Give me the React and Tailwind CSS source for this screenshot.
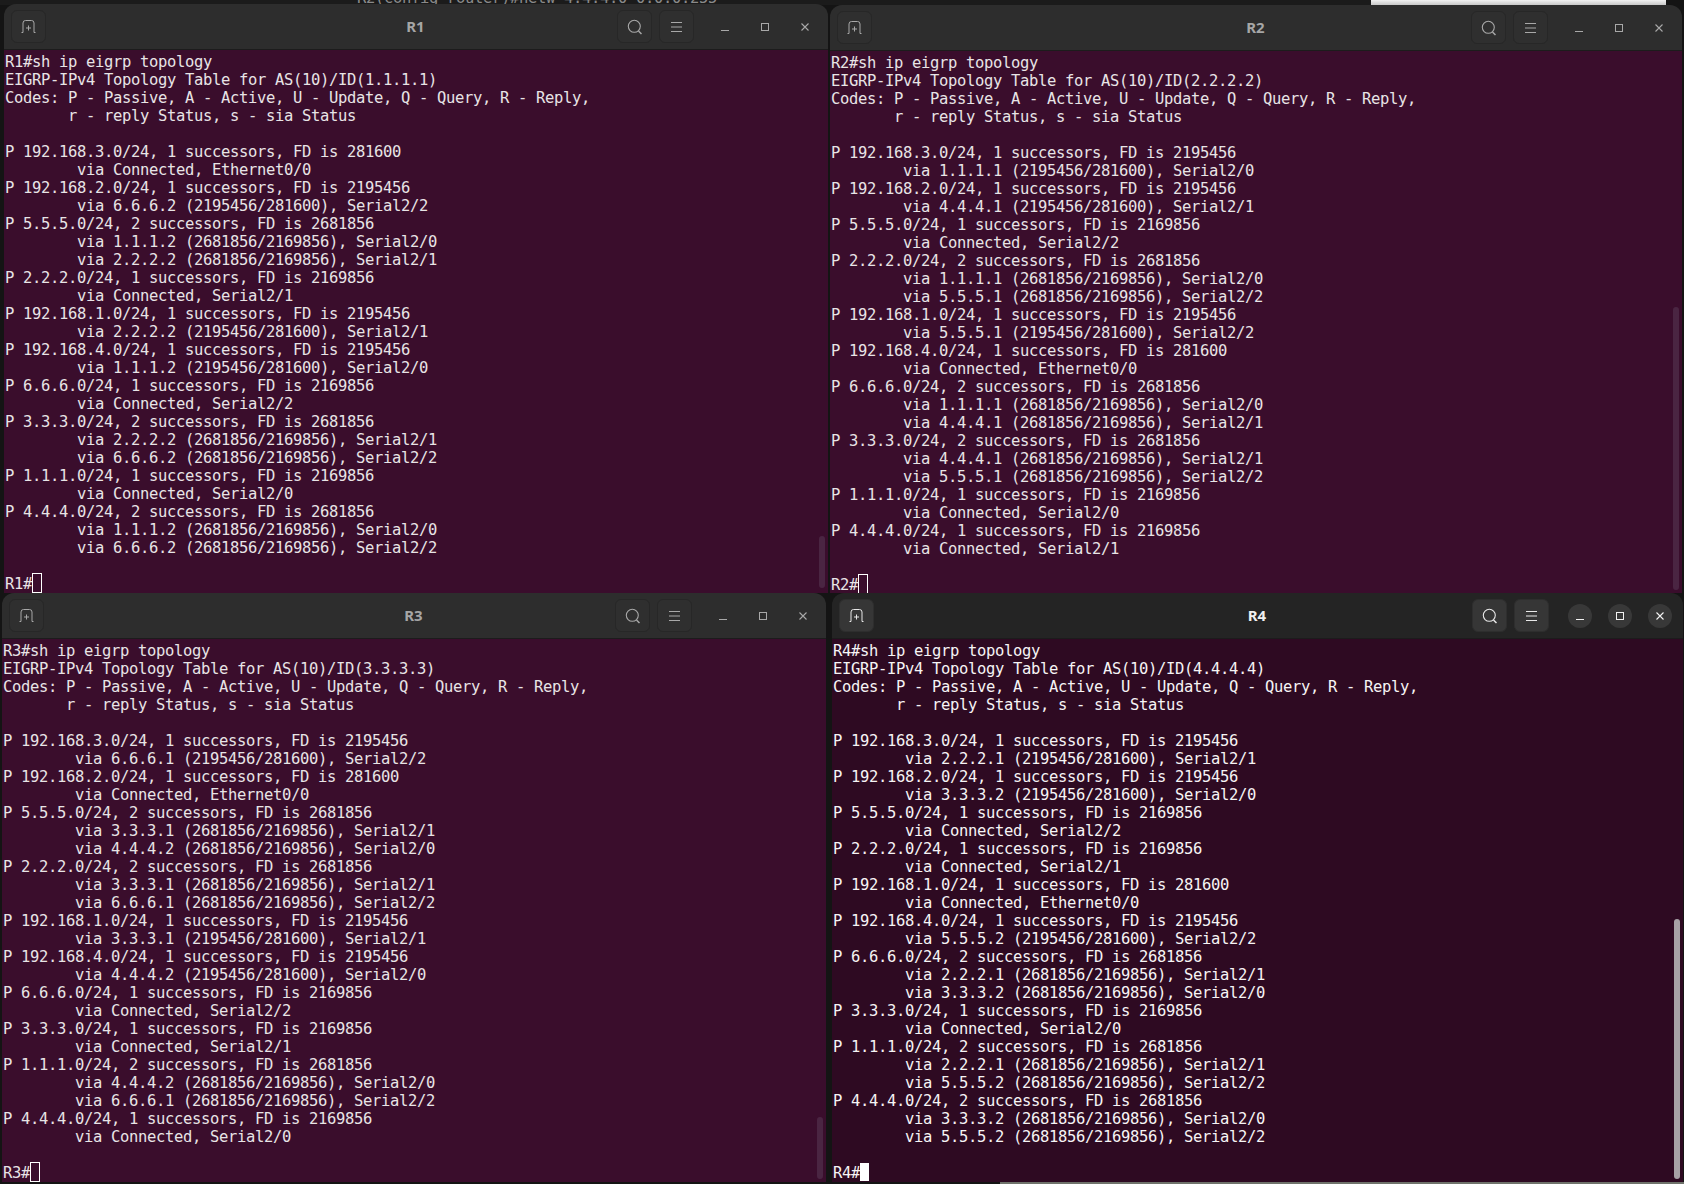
import React from 'react';

const header = (name, id) => `${name}#sh ip eigrp topology
EIGRP-IPv4 Topology Table for AS(10)/ID(${id})
Codes: P - Passive, A - Active, U - Update, Q - Query, R - Reply,
       r - reply Status, s - sia Status

`;

const r1 = header('R1', '1.1.1.1') + `P 192.168.3.0/24, 1 successors, FD is 281600
        via Connected, Ethernet0/0
P 192.168.2.0/24, 1 successors, FD is 2195456
        via 6.6.6.2 (2195456/281600), Serial2/2
P 5.5.5.0/24, 2 successors, FD is 2681856
        via 1.1.1.2 (2681856/2169856), Serial2/0
        via 2.2.2.2 (2681856/2169856), Serial2/1
P 2.2.2.0/24, 1 successors, FD is 2169856
        via Connected, Serial2/1
P 192.168.1.0/24, 1 successors, FD is 2195456
        via 2.2.2.2 (2195456/281600), Serial2/1
P 192.168.4.0/24, 1 successors, FD is 2195456
        via 1.1.1.2 (2195456/281600), Serial2/0
P 6.6.6.0/24, 1 successors, FD is 2169856
        via Connected, Serial2/2
P 3.3.3.0/24, 2 successors, FD is 2681856
        via 2.2.2.2 (2681856/2169856), Serial2/1
        via 6.6.6.2 (2681856/2169856), Serial2/2
P 1.1.1.0/24, 1 successors, FD is 2169856
        via Connected, Serial2/0
P 4.4.4.0/24, 2 successors, FD is 2681856
        via 1.1.1.2 (2681856/2169856), Serial2/0
        via 6.6.6.2 (2681856/2169856), Serial2/2

R1#`;

const r2 = header('R2', '2.2.2.2') + `P 192.168.3.0/24, 1 successors, FD is 2195456
        via 1.1.1.1 (2195456/281600), Serial2/0
P 192.168.2.0/24, 1 successors, FD is 2195456
        via 4.4.4.1 (2195456/281600), Serial2/1
P 5.5.5.0/24, 1 successors, FD is 2169856
        via Connected, Serial2/2
P 2.2.2.0/24, 2 successors, FD is 2681856
        via 1.1.1.1 (2681856/2169856), Serial2/0
        via 5.5.5.1 (2681856/2169856), Serial2/2
P 192.168.1.0/24, 1 successors, FD is 2195456
        via 5.5.5.1 (2195456/281600), Serial2/2
P 192.168.4.0/24, 1 successors, FD is 281600
        via Connected, Ethernet0/0
P 6.6.6.0/24, 2 successors, FD is 2681856
        via 1.1.1.1 (2681856/2169856), Serial2/0
        via 4.4.4.1 (2681856/2169856), Serial2/1
P 3.3.3.0/24, 2 successors, FD is 2681856
        via 4.4.4.1 (2681856/2169856), Serial2/1
        via 5.5.5.1 (2681856/2169856), Serial2/2
P 1.1.1.0/24, 1 successors, FD is 2169856
        via Connected, Serial2/0
P 4.4.4.0/24, 1 successors, FD is 2169856
        via Connected, Serial2/1

R2#`;

const r3 = header('R3', '3.3.3.3') + `P 192.168.3.0/24, 1 successors, FD is 2195456
        via 6.6.6.1 (2195456/281600), Serial2/2
P 192.168.2.0/24, 1 successors, FD is 281600
        via Connected, Ethernet0/0
P 5.5.5.0/24, 2 successors, FD is 2681856
        via 3.3.3.1 (2681856/2169856), Serial2/1
        via 4.4.4.2 (2681856/2169856), Serial2/0
P 2.2.2.0/24, 2 successors, FD is 2681856
        via 3.3.3.1 (2681856/2169856), Serial2/1
        via 6.6.6.1 (2681856/2169856), Serial2/2
P 192.168.1.0/24, 1 successors, FD is 2195456
        via 3.3.3.1 (2195456/281600), Serial2/1
P 192.168.4.0/24, 1 successors, FD is 2195456
        via 4.4.4.2 (2195456/281600), Serial2/0
P 6.6.6.0/24, 1 successors, FD is 2169856
        via Connected, Serial2/2
P 3.3.3.0/24, 1 successors, FD is 2169856
        via Connected, Serial2/1
P 1.1.1.0/24, 2 successors, FD is 2681856
        via 4.4.4.2 (2681856/2169856), Serial2/0
        via 6.6.6.1 (2681856/2169856), Serial2/2
P 4.4.4.0/24, 1 successors, FD is 2169856
        via Connected, Serial2/0

R3#`;

const r4 = header('R4', '4.4.4.4') + `P 192.168.3.0/24, 1 successors, FD is 2195456
        via 2.2.2.1 (2195456/281600), Serial2/1
P 192.168.2.0/24, 1 successors, FD is 2195456
        via 3.3.3.2 (2195456/281600), Serial2/0
P 5.5.5.0/24, 1 successors, FD is 2169856
        via Connected, Serial2/2
P 2.2.2.0/24, 1 successors, FD is 2169856
        via Connected, Serial2/1
P 192.168.1.0/24, 1 successors, FD is 281600
        via Connected, Ethernet0/0
P 192.168.4.0/24, 1 successors, FD is 2195456
        via 5.5.5.2 (2195456/281600), Serial2/2
P 6.6.6.0/24, 2 successors, FD is 2681856
        via 2.2.2.1 (2681856/2169856), Serial2/1
        via 3.3.3.2 (2681856/2169856), Serial2/0
P 3.3.3.0/24, 1 successors, FD is 2169856
        via Connected, Serial2/0
P 1.1.1.0/24, 2 successors, FD is 2681856
        via 2.2.2.1 (2681856/2169856), Serial2/1
        via 5.5.5.2 (2681856/2169856), Serial2/2
P 4.4.4.0/24, 2 successors, FD is 2681856
        via 3.3.3.2 (2681856/2169856), Serial2/0
        via 5.5.5.2 (2681856/2169856), Serial2/2

R4#`;

const NewTabIcon = () => (
  <svg width="15" height="13" viewBox="0 0 15 13" fill="none" stroke="currentColor" strokeWidth="1">
    <path d="M0.5 12.5h1.5V3a2.5 2.5 0 0 1 2.5-2.5h6A2.5 2.5 0 0 1 13 3v9.5h1.5" />
    <path d="M7.5 5.5v5M5 8h5" />
  </svg>
);

const SearchIcon = () => (
  <svg width="16" height="16" viewBox="0 0 16 16" fill="none" stroke="currentColor" strokeWidth="1.1">
    <circle cx="7.3" cy="7.3" r="6" />
    <path d="M11.5 12l3 3" strokeWidth="1.5" />
  </svg>
);

const MenuIcon = () => (
  <svg width="14" height="12" viewBox="0 0 14 12" fill="none" stroke="currentColor" strokeWidth="1">
    <path d="M1 1.5h11M1 6h11M1 10.5h11" />
  </svg>
);

const MinIcon = () => (
  <svg width="12" height="12" viewBox="0 0 12 12" fill="none" stroke="currentColor" strokeWidth="1">
    <path d="M2 9.5h8" />
  </svg>
);

const MaxIcon = () => (
  <svg width="12" height="12" viewBox="0 0 12 12" fill="none" stroke="currentColor" strokeWidth="1">
    <rect x="2.5" y="2.5" width="7" height="7" />
  </svg>
);

const CloseIcon = () => (
  <svg width="12" height="12" viewBox="0 0 12 12" fill="none" stroke="currentColor" strokeWidth="1.1">
    <path d="M2.5 2.5l7 7M9.5 2.5l-7 7" />
  </svg>
);

const ToolButton = ({ focused, children }) => (
  <div className={`flex h-[33px] w-[35px] items-center justify-center rounded-[6px] border ${focused ? 'border-[#2e2e2e] bg-[#363636] text-[#e8e8e8]' : 'border-[#272727] bg-[#2f2f2f] text-[#a8a8a8]'}`}>
    {children}
  </div>
);

const WindowButton = ({ focused, children }) => (
  <div className="flex h-[33px] w-[40px] items-center justify-center">
    <div className={`flex h-[24px] w-[24px] items-center justify-center rounded-full ${focused ? 'bg-[#383838] text-[#f2f2f2]' : 'text-[#a8a8a8]'}`}>
      {children}
    </div>
  </div>
);

const Terminal = ({ title, text, focused, className, barClass }) => (
  <div className={`absolute flex flex-col overflow-hidden rounded-t-[12px] ${className}`}>
    <div className={`grid h-[46px] shrink-0 grid-cols-[1fr_auto_1fr] items-center border-b border-[#1c1c1c] pl-[7px] pr-[3px] ${focused ? 'bg-[#242424]' : 'bg-[#2d2d2d]'}`}>
      <div className="flex">
        <ToolButton focused={focused}><NewTabIcon /></ToolButton>
      </div>
      <div className={`pr-[5px] text-[15px] font-bold ${focused ? 'text-[#f0f0f0]' : 'text-[#a6a6a6]'}`} style={{ fontFamily: '"Noto Sans", sans-serif' }}>{title}</div>
      <div className="flex items-center justify-end gap-[7px]">
        <ToolButton focused={focused}><SearchIcon /></ToolButton>
        <ToolButton focused={focused}><MenuIcon /></ToolButton>
        <div className="ml-[4px] flex">
          <WindowButton focused={focused}><MinIcon /></WindowButton>
          <WindowButton focused={focused}><MaxIcon /></WindowButton>
          <WindowButton focused={focused}><CloseIcon /></WindowButton>
        </div>
      </div>
    </div>
    <div className={`relative flex-1 overflow-hidden ${focused ? 'bg-[#2e0a22] text-[#f6f4f5]' : 'bg-[#3a0d2c] text-[#e8e4e6]'}`}>
      <pre className="pl-[1px] pt-[3px] font-['DejaVu_Sans_Mono',monospace] text-[15.5px] leading-[18px] tracking-[-0.33px]">
        {text}
        {focused
          ? <span className="-mt-[1px] inline-block h-[18px] w-[9px] bg-white align-top" />
          : <span className="-mt-[2px] inline-block h-[20px] w-[10px] border border-white align-top" />}
      </pre>
      <div className={`absolute right-[3px] w-[6px] rounded-full ${barClass}`} />
    </div>
  </div>
);

export default function App() {
  return (
    <div className="relative h-[1184px] w-[1684px] overflow-hidden bg-[#141414]">
      {/* what's left of the windows behind */}
      <div className="absolute left-0 top-0 flex h-[5px] w-[1684px]">
        <div className="relative w-[1371px] overflow-hidden bg-[#1b1b1b]">
          <div className="absolute -top-[11px] left-[357px] whitespace-pre font-['DejaVu_Sans_Mono',monospace] text-[15.5px] leading-[18px] tracking-[-0.33px] text-[#8a8a8a]">R2(config-router)#netw 4.4.4.0 0.0.0.255</div>
        </div>
        <div className="w-[295px] bg-gradient-to-b from-[#f2f2f2] to-[#c8c8c8]" />
      </div>
      <div className="absolute bottom-0 left-[1000px] h-[2px] w-[684px] bg-[#6f736b]" />

      <Terminal title="R1" text={r1} className="left-[4px] top-[4px] h-[589px] w-[824px]" barClass="top-[486px] h-[52px] bg-[#4a2542]" />
      <Terminal title="R2" text={r2} className="left-[830px] top-[5px] h-[588px] w-[852px]" barClass="top-[256px] h-[283px] bg-[#4a2542]" />
      <Terminal title="R3" text={r3} className="left-[2px] top-[593px] h-[589px] w-[824px]" barClass="top-[478px] h-[62px] bg-[#4a2542]" />
      <Terminal title="R4" text={r4} focused className="left-[832px] top-[593px] h-[589px] w-[851px]" barClass="top-[280px] h-[260px] bg-[#a7a2a6]" />
    </div>
  );
}
